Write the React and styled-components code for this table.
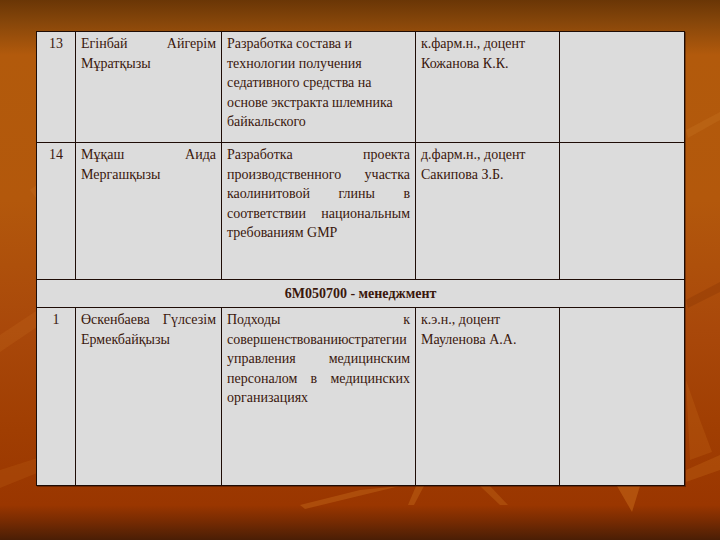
import React from 'react'
import styled, { createGlobalStyle } from 'styled-components'

const GlobalStyle = createGlobalStyle`
  html, body {
    margin: 0;
    padding: 0;
  }
  body {
    font-family: "Liberation Serif", "Times New Roman", serif;
  }
`

const rows = [
  {
    num: '13',
    name: 'Егінбай Айгерім Мұратқызы',
    topic: 'Разработка состава и технологии получения седативного средства на основе экстракта шлемника байкальского',
    justify: false,
    advisor: ['к.фарм.н., доцент', 'Кожанова К.К.'],
    height: 111,
  },
  {
    num: '14',
    name: 'Мұқаш Аида Мергашқызы',
    topic: 'Разработка проекта производственного участка каолинитовой глины в соответствии национальным требованиям GMP',
    justify: true,
    advisor: ['д.фарм.н., доцент', 'Сакипова З.Б.'],
    height: 137,
  },
]

const lastRows = [
  {
    num: '1',
    name: 'Өскенбаева Гүлсезім Ермекбайқызы',
    topic: 'Подходы к совершенствованиюстратегии управления медицинским персоналом в медицинских организациях',
    justify: true,
    advisor: ['к.э.н., доцент', 'Мауленова А.А.'],
    height: 178,
  },
]

const Slide = () => {
  const renderRow = (row) => (
    <Row key={row.num} $h={row.height}>
      <NumCell>{row.num}</NumCell>
      <Cell $justify>{row.name}</Cell>
      <Cell $justify={row.justify}>{row.topic}</Cell>
      <Cell>
        {row.advisor[0]}
        <br />
        {row.advisor[1]}
      </Cell>
      <Cell />
    </Row>
  )

  return (
    <Page>
      {/* faint light streaks of the slide background */}
      <Streaks viewBox="0 0 720 540" preserveAspectRatio="none">
        <polygon points="0,335 110,262 118,272 0,352" fill="#d47a26" opacity="0.18" />
        <polygon points="0,470 100,438 104,446 0,488" fill="#d47a26" opacity="0.16" />
        <polygon points="30,190 70,160 74,165 36,198" fill="#d98a36" opacity="0.14" />
        <polygon points="686,130 720,112 720,120 688,138" fill="#d98a36" opacity="0.18" />
        <polygon points="686,300 720,282 720,292 688,308" fill="#7a2a00" opacity="0.25" />
        <polygon points="686,380 700,420 712,452 690,460" fill="#c46818" opacity="0.3" />
        <polygon points="300,505 360,490 400,486 305,509" fill="#c46818" opacity="0.45" />
        <polygon points="408,505 416,486 424,486 414,505" fill="#c46818" opacity="0.45" />
        <polygon points="480,486 490,486 508,505 500,505" fill="#c46818" opacity="0.4" />
        <polygon points="617,486 640,486 632,512" fill="#c46818" opacity="0.55" />
        <polygon points="686,470 720,455 720,470 686,482" fill="#c46818" opacity="0.35" />
      </Streaks>
      <Table>
        <colgroup>
          <col style={{ width: 39 }} />
          <col style={{ width: 146 }} />
          <col style={{ width: 194 }} />
          <col style={{ width: 144 }} />
          <col style={{ width: 125 }} />
        </colgroup>
        <tbody>
          {rows.map(renderRow)}
          <Row $h={28}>
            <HeadCell colSpan={5}>6М050700 - менеджмент</HeadCell>
          </Row>
          {lastRows.map(renderRow)}
        </tbody>
      </Table>
    </Page>
  )
}

const Page = styled.div`
  position: relative;
  width: 720px;
  height: 540px;
  overflow: hidden;
  box-sizing: border-box;
  padding: 31px 0 0 36px;
  background:
    linear-gradient(
      to bottom,
      #6a3606 0px,
      #86460a 22px,
      #b25a0c 55px,
      #b3580c 200px,
      #a9480a 330px,
      #a03e02 430px,
      #9a3600 505px,
      #7a2c02 520px,
      #4a1e05 540px
    );
`

const Streaks = styled.svg`
  position: absolute;
  inset: 0;
  width: 720px;
  height: 540px;
  pointer-events: none;
`

const Table = styled.table`
  position: relative;
  width: 648px;
  table-layout: fixed;
  border-collapse: collapse;
  background: #dcdcdc;
  color: #3a170c;
  font-family: "Liberation Serif", "Times New Roman", serif;
  font-size: 14px;
  line-height: 19.5px;
  box-shadow: 1px 1px 0 rgba(40, 10, 0, 0.4);
`

const Row = styled.tr`
  height: ${(p) => p.$h}px;
`

const Cell = styled.td`
  border: 1px solid #1e0c06;
  vertical-align: top;
  padding: 2px 5px 0 5px;
  text-align: ${(p) => (p.$justify ? 'justify' : 'left')};
`

const NumCell = styled(Cell)`
  text-align: center;
  padding-left: 2px;
  padding-right: 2px;
`

const HeadCell = styled.td`
  border: 1px solid #1e0c06;
  text-align: center;
  vertical-align: middle;
  font-weight: bold;
  padding: 0;
`

export default function App() {
  return (
    <>
      <GlobalStyle />
      <Slide />
    </>
  )
}
